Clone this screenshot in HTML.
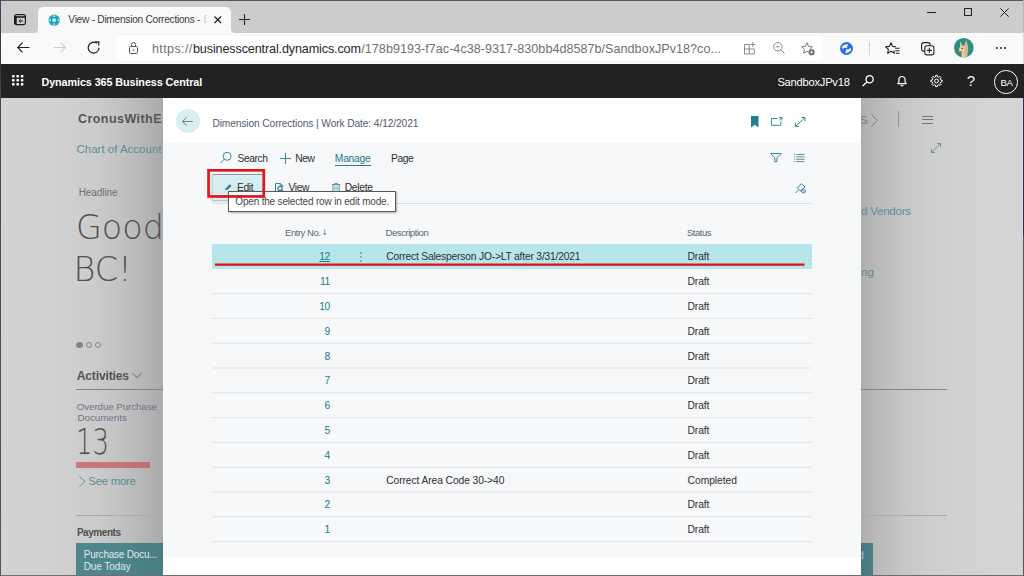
<!DOCTYPE html>
<html>
<head>
<meta charset="utf-8">
<title>View - Dimension Corrections</title>
<style>
*{box-sizing:border-box;margin:0;padding:0}
html,body{width:1024px;height:576px;overflow:hidden;background:#d2d2d2}
body{font-family:"Liberation Sans",sans-serif;position:relative;color:#212121}
.abs{position:absolute}
.t{position:absolute;white-space:nowrap;line-height:1}
svg{position:absolute;overflow:visible}
.light{font-family:"DejaVu Sans Light","DejaVu Sans","Liberation Sans",sans-serif;font-weight:200}
#tabbar{left:0;top:0;width:1024px;height:33px;background:#cccccc}
#topline{left:0;top:0;width:1024px;height:1px;background:#55585c}
#tab{left:38px;top:7px;width:193px;height:26px;background:#f9f9f9;border-radius:5px 5px 0 0}
#toolbar{left:0;top:33px;width:1024px;height:31px;background:#f9f9f9}
#url{left:116px;top:36px;width:707px;height:24px;background:#fff;border-radius:4px}
#apphdr{left:0;top:64px;width:1024px;height:34px;background:#222222}
#leftedge{left:0;top:0;width:1px;height:576px;background:linear-gradient(180deg,#3b4a66 0,#30363f 64px,#4a4a4a 98px,#555 100%)}
#bg{left:0;top:98px;width:163px;height:478px;background:linear-gradient(90deg,#d3d3d3 0,#d1d1d1 60px,#cbcbcb 95px,#c0c0c0 125px,#b5b5b5 145px,#aaaaaa 163px)}
#bgr{left:861px;top:98px;width:163px;height:478px;background:linear-gradient(90deg,#adadad 0,#b9b9b9 15px,#c5c5c5 40px,#cecece 70px,#d3d3d3 110px,#d5d5d5 163px)}
#dlg{left:163px;top:98px;width:698px;height:478px;background:#f6f8f9}
#dlghdr{left:163px;top:98px;width:698px;height:45px;background:#fff}
#dlgftr{left:163px;top:557px;width:698px;height:19px;background:#fff}
#botline{left:0;top:575px;width:1024px;height:1px;background:#6e6e6e}
.row{position:absolute;left:212px;width:599px;height:1px;background:#dcdfe1}
</style>
</head>
<body>
<div class="abs" id="bg"></div>
<div class="abs" id="bgr"></div>

<!-- left background content -->
<div class="t light" style="left:76px;top:210.5px;font-size:33.4px;color:#505050;transform:scaleX(1.0);transform-origin:0 0">Good</div>
<div class="t light" style="left:73.6px;top:252.5px;font-size:33.4px;color:#505050;transform:scaleX(1.0);transform-origin:0 0">BC!</div>
<div class="abs" style="left:76px;top:342px;width:7px;height:6px;border-radius:50%;background:#7b8494"></div>
<div class="abs" style="left:86px;top:342px;width:6px;height:6px;border-radius:50%;border:1px solid #80858f"></div>
<div class="abs" style="left:95px;top:342px;width:6px;height:6px;border-radius:50%;border:1px solid #80858f"></div>
<svg style="left:132px;top:373px" width="10" height="5" viewBox="0 0 10 5"><path d="M0.3 0.3 L5 4.6 L9.7 0.3" fill="none" stroke="#666" stroke-width="0.9"/></svg>
<div class="abs" style="left:76px;top:389px;width:87px;height:1px;background:#7d8494"></div>
<div class="t light" style="left:75.5px;top:425px;font-size:35px;color:#505050;transform:scaleX(0.74);transform-origin:0 0">13</div>
<div class="abs" style="left:76px;top:462px;width:74px;height:6px;background:linear-gradient(90deg,#c97b7c,#ba7172)"></div>
<svg style="left:79px;top:475.5px" width="7" height="11" viewBox="0 0 7 11"><path d="M0.4 0.4 L6 5.5 L0.4 10.6" fill="none" stroke="#5b8e94" stroke-width="0.9"/></svg>
<div class="abs" style="left:76px;top:515px;width:87px;height:1px;background:#a8abb1"></div>
<div class="abs" style="left:76px;top:543px;width:87px;height:33px;background:linear-gradient(90deg,#50878e 0,#4f858c 40px,#4a7c83 87px)"></div>

<!-- right background content -->
<div class="t" style="left:860.5px;top:116.3px;font-size:10px;color:#737986">S<span style="font-size:5px">i</span></div>
<svg style="left:871px;top:114px" width="7" height="13" viewBox="0 0 7 13"><path d="M0.4 0.4 L6.5 6.5 L0.4 12.6" fill="none" stroke="#70757f" stroke-width="0.9"/></svg>
<div class="abs" style="left:898px;top:111px;width:1px;height:16px;background:#8f949c"></div>
<div class="abs" style="left:921.5px;top:115.5px;width:11.5px;height:1px;background:#70757f"></div>
<div class="abs" style="left:921.5px;top:119px;width:11.5px;height:1px;background:#70757f"></div>
<div class="abs" style="left:921.5px;top:122.5px;width:11.5px;height:1px;background:#70757f"></div>
<svg style="left:931px;top:143px" width="10" height="10" viewBox="0 0 10 10"><path d="M0.5 9.5 L9.5 0.5 M6 0.5 H9.5 V4 M0.5 6 V9.5 H4" fill="none" stroke="#5b8e94" stroke-width="0.9"/></svg>
<div class="abs" style="left:861px;top:389px;width:86px;height:1px;background:#7d8494"></div>
<div class="abs" style="left:861px;top:515px;width:86px;height:1px;background:#a8abb1"></div>
<div class="abs" style="left:861px;top:543px;width:12px;height:33px;background:linear-gradient(90deg,#467780,#4b7f87)"></div>
<div class="t" style="left:858.3px;top:550.5px;font-size:10px;color:#a9c4c8">d</div>

<!-- dialog -->
<div class="abs" id="dlg"></div>
<div class="abs" id="dlghdr"></div>
<div class="abs" id="dlgftr"></div>

<!-- back button -->
<div class="abs" style="left:175.5px;top:109px;width:24px;height:24px;border-radius:50%;background:#d8eff2"></div>
<svg style="left:182px;top:116.5px" width="11" height="9" viewBox="0 0 11 9"><path d="M10.8 4.5 H0.8 M4.6 0.4 L0.6 4.5 L4.6 8.6" fill="none" stroke="#69797e" stroke-width="0.9"/></svg>

<!-- header right icons -->
<svg style="left:750.5px;top:116px" width="7.5" height="11.5" viewBox="0 0 7.5 11.5"><path d="M0 0 H7.5 V11.5 L3.75 8.7 L0 11.5 Z" fill="#237f8b"/></svg>
<svg style="left:771px;top:117px" width="11.5" height="9" viewBox="0 0 11.5 9"><path d="M6.5 1.5 H0.5 V8.3 H9.8 V4.5 M8 0.5 H11 V3.5 M11 0.5 L8 3.3" fill="none" stroke="#237f8b" stroke-width="0.9"/></svg>
<svg style="left:795px;top:117px" width="10.5" height="10" viewBox="0 0 10.5 10"><path d="M0.5 9.5 L10 0.5 M6.3 0.5 H10 V4 M0.5 6 V9.5 H4.2" fill="none" stroke="#237f8b" stroke-width="0.9"/></svg>

<!-- action bar row 1 icons -->
<svg style="left:219.8px;top:152px" width="12" height="12" viewBox="0 0 12 12"><circle cx="7.1" cy="4.3" r="4" fill="none" stroke="#237f8b" stroke-width="0.9"/><path d="M4.2 7.2 L0.4 11.2" stroke="#237f8b" stroke-width="0.9" fill="none"/></svg>
<svg style="left:280px;top:153px" width="11" height="11" viewBox="0 0 11 11"><path d="M5.5 0 V11 M0 5.5 H11" stroke="#237f8b" stroke-width="0.9" fill="none"/></svg>
<div class="abs" style="left:334.5px;top:164.5px;width:36.5px;height:1.2px;background:#237f8b"></div>
<svg style="left:769.7px;top:153px" width="11.7" height="9.5" viewBox="0 0 11.7 9.5"><path d="M0.5 0.5 H11.2 L7 4.8 V8.5 L4.8 9 V4.8 Z" fill="none" stroke="#237f8b" stroke-width="0.9"/></svg>
<svg style="left:794.4px;top:154px" width="10.6" height="8" viewBox="0 0 10.6 8"><path d="M2.2 0.5 H10.6 M2.2 2.9 H10.6 M2.2 5.3 H10.6 M2.2 7.6 H10.6 M0 0.5 H1.2 M0 2.9 H1.2 M0 5.3 H1.2 M0 7.6 H1.2" stroke="#237f8b" stroke-width="0.8" fill="none"/></svg>

<!-- action bar row 2 -->
<div class="abs" style="left:212px;top:174px;width:50.5px;height:26px;background:#d5eef1;border-top:1px solid #8c9a9c;border-left:1px solid #c2d6d8;box-shadow:0 1px 2px rgba(0,0,0,.3)"></div>
<div class="abs" style="left:212px;top:203px;width:599px;height:1px;background:#dcdfe1"></div>
<svg style="left:224.8px;top:184px" width="6.8" height="6.4" viewBox="0 0 6.8 6.4"><path d="M0.2 6.3 L0.9 4.2 L4.8 0.3 L6.5 1.9 L2.5 5.7 Z" fill="#237f8b"/></svg>
<svg style="left:275px;top:182.6px" width="9" height="9" viewBox="0 0 9 9"><path d="M0.5 8.6 V0.5 H5.5 L8 3 V3.8 M5.3 0.5 V3 H8" fill="none" stroke="#237f8b" stroke-width="0.9"/><circle cx="5" cy="5.4" r="2.1" fill="none" stroke="#237f8b" stroke-width="1.1"/><path d="M6.6 7 L8.6 8.8" stroke="#237f8b" stroke-width="1.1"/></svg>
<svg style="left:331.6px;top:182.6px" width="8.2" height="9" viewBox="0 0 8.2 9"><path d="M0 1.6 H8.2 M2.9 0.4 H5.3 V1.6 M2.9 0.4 V1.6 M1 1.6 V8.6 H7.2 V1.6" fill="none" stroke="#237f8b" stroke-width="0.8"/><path d="M2.8 3 V7.4 M4.1 3 V7.4 M5.4 3 V7.4" fill="none" stroke="#4d9aa4" stroke-width="0.6"/></svg>
<svg style="left:795px;top:182.5px" width="10.7" height="10.4" viewBox="0 0 10.7 10.4"><path d="M0.4 10 L3.6 6.8 M1.6 4.2 L6 8.6 M2.6 5 L6.4 0.6 L10 4 L5.4 7.8" fill="none" stroke="#237f8b" stroke-width="0.9"/><circle cx="8.4" cy="8" r="1.9" fill="#f6f8f9" stroke="#237f8b" stroke-width="0.9"/><path d="M7.2 6.8 L9.6 9.2" stroke="#237f8b" stroke-width="0.7"/></svg>


<!-- tooltip -->
<div class="abs" style="left:228px;top:191px;width:168px;height:21px;background:#fff;border:1px solid #5a5a5a;box-shadow:1px 1px 2px rgba(0,0,0,.3)"></div>
<!-- red highlight box -->
<svg style="left:0;top:0" width="1024" height="576"><rect x="208.55" y="170.35" width="55.2" height="26.1" fill="none" stroke="#e3141b" stroke-width="2.7"/></svg>

<!-- selected row -->
<div class="abs" style="left:212px;top:244.3px;width:599.5px;height:24.5px;background:#b6e6ea"></div>
<svg style="left:0;top:0" width="1024" height="576"><rect x="215" y="263.5" width="589.5" height="2.3" fill="#e3141b"/>
<g fill="#6a7a80"><rect x="360.2" y="252.3" width="1.4" height="1.5"/><rect x="360.2" y="256.3" width="1.4" height="1.5"/><rect x="360.2" y="260.3" width="1.4" height="1.5"/></g>
<g fill="#dfe2e4"><rect x="212" y="293.1" width="599.5" height="1"/><rect x="212" y="317.9" width="599.5" height="1"/><rect x="212" y="342.7" width="599.5" height="1"/><rect x="212" y="367.5" width="599.5" height="1"/><rect x="212" y="392.3" width="599.5" height="1"/><rect x="212" y="417.1" width="599.5" height="1"/><rect x="212" y="441.9" width="599.5" height="1"/><rect x="212" y="466.7" width="599.5" height="1"/><rect x="212" y="491.5" width="599.5" height="1"/><rect x="212" y="516.3" width="599.5" height="1"/><rect x="212" y="541.1" width="599.5" height="1"/></g>
</svg>

<!-- app header -->
<div class="abs" id="apphdr"></div>
<svg style="left:11.7px;top:75.3px" width="11.4" height="10.5" viewBox="0 0 11.4 10.5" fill="#fff"><rect x="0" y="0" width="2.6" height="2.4" rx="0.6"/><rect x="4.4" y="0" width="2.6" height="2.4" rx="0.6"/><rect x="8.8" y="0" width="2.6" height="2.4" rx="0.6"/><rect x="0" y="4.05" width="2.6" height="2.4" rx="0.6"/><rect x="4.4" y="4.05" width="2.6" height="2.4" rx="0.6"/><rect x="8.8" y="4.05" width="2.6" height="2.4" rx="0.6"/><rect x="0" y="8.1" width="2.6" height="2.4" rx="0.6"/><rect x="4.4" y="8.1" width="2.6" height="2.4" rx="0.6"/><rect x="8.8" y="8.1" width="2.6" height="2.4" rx="0.6"/></svg>
<svg style="left:861.8px;top:75.4px" width="12" height="11.5" viewBox="0 0 12 11.5"><circle cx="7.6" cy="4.3" r="3.6" fill="none" stroke="#fff" stroke-width="1.3"/><path d="M5 7 L0.6 11" stroke="#fff" stroke-width="1.4" fill="none"/></svg>
<svg style="left:897px;top:76px" width="10" height="10.5" viewBox="0 0 10 10.5"><path d="M0.8 7.7 H9.2 L8.1 6 V3.6 A3.1 3.1 0 0 0 1.9 3.6 V6 Z" fill="none" stroke="#fff" stroke-width="1.2" stroke-linejoin="round"/><path d="M3.7 8.9 A1.4 1.4 0 0 0 6.3 8.9" fill="none" stroke="#fff" stroke-width="1.2"/></svg>
<svg style="left:930px;top:75.4px" width="13" height="12" viewBox="0 0 13 12"><path d="M10.70 5.08 L12.13 5.14 L12.13 6.86 L10.70 6.92 L10.12 8.32 L11.09 9.38 L9.88 10.59 L8.82 9.62 L7.42 10.20 L7.36 11.63 L5.64 11.63 L5.58 10.20 L4.18 9.62 L3.12 10.59 L1.91 9.38 L2.88 8.32 L2.30 6.92 L0.87 6.86 L0.87 5.14 L2.30 5.08 L2.88 3.68 L1.91 2.62 L3.12 1.41 L4.18 2.38 L5.58 1.80 L5.64 0.37 L7.36 0.37 L7.42 1.80 L8.82 2.38 L9.88 1.41 L11.09 2.62 L10.12 3.68 Z" fill="none" stroke="#fff" stroke-width="1" stroke-linejoin="round"/><circle cx="6.5" cy="6" r="1.9" fill="none" stroke="#fff" stroke-width="1"/></svg>
<div class="t" style="left:966.8px;top:72.8px;font-size:15px;color:#f0f0f0">?</div>
<div class="abs" style="left:994px;top:70px;width:23.5px;height:23.5px;border-radius:50%;border:1px solid #fff"></div>

<!-- browser chrome -->
<div class="abs" id="tabbar"></div>
<div class="abs" id="tab"></div>
<svg style="left:34px;top:29px" width="4" height="4" viewBox="0 0 4 4"><path d="M0 4 Q4 4 4 0 V4 Z" fill="#f9f9f9"/></svg>
<svg style="left:231px;top:29px" width="4" height="4" viewBox="0 0 4 4"><path d="M4 4 Q0 4 0 0 V4 Z" fill="#f9f9f9"/></svg>
<div class="abs" id="toolbar"></div>
<div class="abs" id="url"></div>
<div class="abs" id="topline"></div>
<svg style="left:14px;top:14.2px" width="12" height="11.2" viewBox="0 0 12 11.2"><rect x="0.6" y="0.6" width="10.8" height="10" rx="1.8" fill="none" stroke="#1c1c1c" stroke-width="1.2"/><path d="M0.6 3 H11.4" stroke="#1c1c1c" stroke-width="1.6"/><path d="M1.6 2 V10" stroke="#1c1c1c" stroke-width="2.2"/><path d="M5.2 7 H8.8 M6.8 5.4 L5.2 7 L6.8 8.6" stroke="#1c1c1c" stroke-width="1" fill="none"/></svg>
<svg style="left:47.5px;top:13.7px" width="12.3" height="12.3" viewBox="0 0 13 13"><circle cx="6.5" cy="6.5" r="6" fill="#1cb0c2"/><path d="M6.5 0 L7.6 3.2 L5.4 3.2 Z M6.5 13 L7.6 9.8 L5.4 9.8 Z M0 6.5 L3.2 5.4 L3.2 7.6 Z M13 6.5 L9.8 5.4 L9.8 7.6 Z" fill="#bdf0f5"/><circle cx="6.5" cy="6.5" r="3.4" fill="#0f8fa3"/><circle cx="6.5" cy="6.5" r="2.3" fill="#a6e9f0"/><circle cx="6.2" cy="6.2" r="1.1" fill="#e8fbfd"/></svg>
<div class="t" style="left:203.6px;top:14.9px;font-size:10.2px;color:#cfcfcf;width:3.4px;overflow:hidden">D</div>
<svg style="left:214px;top:16px" width="7.5" height="7.5" viewBox="0 0 7.5 7.5"><path d="M0.5 0.5 L7 7 M7 0.5 L0.5 7" stroke="#222" stroke-width="1.3"/></svg>
<svg style="left:239px;top:14px" width="11" height="11" viewBox="0 0 11 11"><path d="M5.5 0 V11 M0 5.5 H11" stroke="#222" stroke-width="1.1"/></svg>
<div class="abs" style="left:927px;top:12px;width:8.5px;height:1px;background:#222"></div>
<div class="abs" style="left:964px;top:8px;width:8px;height:8px;border:1px solid #222"></div>
<svg style="left:1000.4px;top:7.8px" width="9" height="9" viewBox="0 0 9 9"><path d="M0.3 0.3 L8.7 8.7 M8.7 0.3 L0.3 8.7" stroke="#222" stroke-width="1"/></svg>
<svg style="left:17px;top:42px" width="13" height="11" viewBox="0 0 13 11"><path d="M12.5 5.5 H1 M5.5 0.7 L0.8 5.5 L5.5 10.3" fill="none" stroke="#222" stroke-width="1.2"/></svg>
<svg style="left:52.5px;top:42px" width="13" height="11" viewBox="0 0 13 11"><path d="M0.5 5.5 H12 M7.5 0.7 L12.2 5.5 L7.5 10.3" fill="none" stroke="#cdcdcd" stroke-width="1.2"/></svg>
<svg style="left:87px;top:41.3px" width="13.3" height="13.3" viewBox="0 0 13 13"><path d="M11.8 6.5 A5.3 5.3 0 1 1 9.8 2.3" fill="none" stroke="#222" stroke-width="1.2"/><path d="M8 0.8 H11.5 V4.3" fill="none" stroke="#222" stroke-width="1.2"/></svg>
<svg style="left:129px;top:41.5px" width="9" height="12" viewBox="0 0 9 12"><rect x="0.5" y="4.5" width="8" height="7" rx="1" fill="none" stroke="#555" stroke-width="1"/><path d="M2.5 4.5 V2.5 A2 2 0 0 1 6.5 2.5 V4.5" fill="none" stroke="#555" stroke-width="1"/><circle cx="4.5" cy="8" r="0.8" fill="#555"/></svg>
<svg style="left:744.4px;top:41.8px" width="12.3" height="12.6" viewBox="0 0 12.3 12.6"><path d="M0.5 2.5 H5.3 V12 H0.5 Z M5.3 7 H10.3 V12 H5.3 M0.5 7 H5.3 M8.8 0 V5 M6.3 2.5 H11.3" fill="none" stroke="#8a8a8a" stroke-width="1"/></svg>
<svg style="left:773px;top:42px" width="12" height="12" viewBox="0 0 12 12"><circle cx="4.8" cy="4.8" r="4.2" fill="none" stroke="#8a8a8a" stroke-width="1"/><path d="M7.8 7.8 L11.5 11.5 M2.8 4.8 H6.8" stroke="#8a8a8a" stroke-width="1" fill="none"/></svg>
<svg style="left:801px;top:41.5px" width="14.5" height="13.5" viewBox="0 0 14.5 13.5"><path d="M6 0.8 L7.6 4.4 L11.4 4.8 L8.6 7.4 L9.3 11.2 L6 9.3 L2.7 11.2 L3.4 7.4 L0.6 4.8 L4.4 4.4 Z" fill="none" stroke="#7a7a7a" stroke-width="1"/><circle cx="10.6" cy="10.2" r="3.4" fill="#5a5a5a" stroke="#fff" stroke-width="0.7"/><path d="M10.6 8.5 V11.9 M8.9 10.2 H12.3" stroke="#fff" stroke-width="0.9"/></svg>
<svg style="left:840px;top:41.8px" width="13" height="13" viewBox="0 0 13 13"><circle cx="6.5" cy="6.5" r="6.5" fill="#2a6fe0"/><path d="M2 4.6 Q4.6 1.6 8.4 2.4 Q6.4 4.4 7.4 5.6 Q5.4 6.4 4.2 5.8 Q3.4 7.4 2.2 6.6 Z" fill="#eef4fe"/><path d="M11 8.2 Q9 11.6 5 10.8 Q6.8 9 5.8 7.6 Q7.8 6.6 9 7.2 Q9.8 5.8 11 6.4 Z" fill="#eef4fe"/></svg>
<div class="abs" style="left:869px;top:42px;width:1px;height:13px;background:#d2d2d2"></div>
<svg style="left:885px;top:41.5px" width="15" height="14" viewBox="0 0 15 14"><path d="M11 4.8 L7.6 4.4 L6 0.8 L4.4 4.4 L0.6 4.8 L3.4 7.4 L2.7 11.2 L6 9.3 L9.3 11.2 L8.8 8.5" fill="none" stroke="#222" stroke-width="1.1" stroke-linejoin="round"/><path d="M10 6.2 H14.5 M10.3 8.7 H14.5 M10.8 11.2 H14.5" stroke="#222" stroke-width="1.1"/></svg>
<svg style="left:921px;top:41.5px" width="13.5" height="13.5" viewBox="0 0 13.5 13.5"><rect x="0.6" y="0.6" width="8.5" height="8.5" rx="2.2" fill="none" stroke="#222" stroke-width="1.1"/><rect x="3.8" y="3.8" width="9.1" height="9.1" rx="2.2" fill="#f9f9f9" stroke="#222" stroke-width="1.1"/><path d="M8.35 5.8 V10.9 M5.8 8.35 H10.9" stroke="#222" stroke-width="1.1"/></svg>
<svg style="left:954.2px;top:38.2px" width="19.6" height="19.6" viewBox="0 0 20 20"><defs><clipPath id="av"><circle cx="10" cy="10" r="10"/></clipPath></defs><circle cx="10" cy="10" r="10" fill="#2b8f7f"/><g clip-path="url(#av)"><path d="M6.3 3 L8.4 8 L10.6 7.6 L12.6 2.2 L14 8.8 Q15 12 13.6 15 L13.4 21 L7.6 21 L7.8 15.4 Q4.2 13.6 4 12 Q5.6 10.4 6.2 8.6 Z" fill="#e9cfa9"/><path d="M10.8 8 L12.6 2.2 L14 8.8 Q15 12 13.6 15 L13.4 21 L10.6 21 Z" fill="#d9b98e"/><path d="M6.9 4.6 L8.2 7.8 L7 8.2 Z M12.3 4 L12.9 7.6 L11.4 7.6 Z" fill="#e8a9a0"/><path d="M5.6 12.8 Q7 14.6 8.6 13.4 Q7.6 15.4 6.2 14.6 Z" fill="#d9483b"/><circle cx="8.4" cy="10.6" r="0.7" fill="#4a2e1c"/><circle cx="4.6" cy="11.9" r="0.7" fill="#4a2e1c"/></g></svg>
<div class="abs" style="left:995.6px;top:47px;width:2.2px;height:2.2px;background:#222;border-radius:50%"></div>
<div class="abs" style="left:999.8px;top:47px;width:2.2px;height:2.2px;background:#222;border-radius:50%"></div>
<div class="abs" style="left:1004px;top:47px;width:2.2px;height:2.2px;background:#222;border-radius:50%"></div>

<div class="t g" style="left:78.0px;top:113.4px;font-size:12.5px;color:#555;letter-spacing:0.445px;font-weight:bold;">CronusWithE</div>
<div class="t g" style="left:76.5px;top:143.6px;font-size:11.5px;color:#5b8e94;letter-spacing:-0.002px;">Chart of Account</div>
<div class="t g" style="left:78.7px;top:187.5px;font-size:10px;color:#6c6f78;letter-spacing:-0.083px;">Headline</div>
<div class="t g" style="left:76.7px;top:369.5px;font-size:12.2px;color:#555;letter-spacing:-0.200px;font-weight:bold;">Activities</div>
<div class="t g" style="left:76.8px;top:402.2px;font-size:9.8px;color:#6e7585;letter-spacing:-0.106px;">Overdue Purchase</div>
<div class="t g" style="left:77.5px;top:413.1px;font-size:9.8px;color:#6e7585;letter-spacing:-0.033px;">Documents</div>
<div class="t g" style="left:88.3px;top:475.6px;font-size:11.5px;color:#5b8e94;letter-spacing:-0.323px;">See more</div>
<div class="t g" style="left:76.9px;top:527.9px;font-size:10px;color:#505050;letter-spacing:-0.450px;font-weight:bold;">Payments</div>
<div class="t g" style="left:83.7px;top:550.0px;font-size:10px;color:#dfeaea;letter-spacing:-0.215px;">Purchase Docu...</div>
<div class="t g" style="left:83.7px;top:561.5px;font-size:10px;color:#dfeaea;letter-spacing:-0.068px;">Due Today</div>
<div class="t g" style="left:861.0px;top:205.7px;font-size:11.5px;color:#5b8e94;letter-spacing:-0.212px;">d Vendors</div>
<div class="t g" style="left:861.0px;top:267.0px;font-size:11.5px;color:#5b8e94;letter-spacing:0.003px;">ng</div>
<div class="t g" style="left:212.4px;top:119.1px;font-size:10.2px;color:#505c6d;letter-spacing:-0.100px;">Dimension Corrections | Work Date: 4/12/2021</div>
<div class="t g" style="left:237.6px;top:154.2px;font-size:10.3px;color:#303030;letter-spacing:-0.450px;">Search</div>
<div class="t g" style="left:295.3px;top:154.2px;font-size:10.3px;color:#303030;letter-spacing:-0.450px;">New</div>
<div class="t g" style="left:334.8px;top:154.2px;font-size:10.3px;color:#1d7a86;letter-spacing:-0.244px;">Manage</div>
<div class="t g" style="left:391.0px;top:154.2px;font-size:10.3px;color:#303030;letter-spacing:-0.450px;">Page</div>
<div class="t g" style="left:237.1px;top:183.3px;font-size:10.3px;color:#303030;letter-spacing:-0.450px;">Edit</div>
<div class="t g" style="left:288.6px;top:183.3px;font-size:10.3px;color:#303030;letter-spacing:-0.447px;">View</div>
<div class="t g" style="left:344.7px;top:183.3px;font-size:10.3px;color:#303030;letter-spacing:-0.293px;">Delete</div>
<div class="t g" style="left:235.3px;top:197.4px;font-size:10px;color:#484848;letter-spacing:-0.182px;">Open the selected row in edit mode.</div>
<div class="t g" style="left:285.0px;top:227.8px;font-size:9.5px;color:#5c6670;letter-spacing:-0.450px;">Entry No.</div>
<div class="t g" style="left:321.2px;top:228.4px;font-size:8.2px;color:#6a737c;letter-spacing:-0.450px;font-family:'DejaVu Sans','Liberation Sans',sans-serif;">&#8595;</div>
<div class="t g" style="left:385.6px;top:227.8px;font-size:9.5px;color:#5c6670;letter-spacing:-0.443px;">Description</div>
<div class="t g" style="left:686.9px;top:227.8px;font-size:9.5px;color:#5c6670;letter-spacing:-0.450px;">Status</div>
<div class="t g" style="right:694.1px;top:252.4px;font-size:10.3px;color:#1d7a86;letter-spacing:-0.450px;text-decoration:underline;">12</div>
<div class="t g" style="left:687.6px;top:252.4px;font-size:10.3px;color:#303030;letter-spacing:-0.157px;">Draft</div>
<div class="t g" style="left:386.2px;top:252.4px;font-size:10.3px;color:#303030;letter-spacing:-0.198px;">Correct Salesperson JO-&gt;LT after 3/31/2021</div>
<div class="t g" style="right:694.1px;top:277.2px;font-size:10.3px;color:#1d7a86;letter-spacing:-0.450px;">11</div>
<div class="t g" style="left:687.6px;top:277.2px;font-size:10.3px;color:#303030;letter-spacing:-0.157px;">Draft</div>
<div class="t g" style="right:694.1px;top:302.0px;font-size:10.3px;color:#1d7a86;letter-spacing:-0.450px;">10</div>
<div class="t g" style="left:687.6px;top:302.0px;font-size:10.3px;color:#303030;letter-spacing:-0.157px;">Draft</div>
<div class="t g" style="right:694.1px;top:326.8px;font-size:10.3px;color:#1d7a86;letter-spacing:-0.334px;">9</div>
<div class="t g" style="left:687.6px;top:326.8px;font-size:10.3px;color:#303030;letter-spacing:-0.157px;">Draft</div>
<div class="t g" style="right:694.1px;top:351.6px;font-size:10.3px;color:#1d7a86;letter-spacing:-0.334px;">8</div>
<div class="t g" style="left:687.6px;top:351.6px;font-size:10.3px;color:#303030;letter-spacing:-0.157px;">Draft</div>
<div class="t g" style="right:694.1px;top:376.4px;font-size:10.3px;color:#1d7a86;letter-spacing:-0.334px;">7</div>
<div class="t g" style="left:687.6px;top:376.4px;font-size:10.3px;color:#303030;letter-spacing:-0.157px;">Draft</div>
<div class="t g" style="right:694.1px;top:401.2px;font-size:10.3px;color:#1d7a86;letter-spacing:-0.334px;">6</div>
<div class="t g" style="left:687.6px;top:401.2px;font-size:10.3px;color:#303030;letter-spacing:-0.157px;">Draft</div>
<div class="t g" style="right:694.1px;top:426.0px;font-size:10.3px;color:#1d7a86;letter-spacing:-0.334px;">5</div>
<div class="t g" style="left:687.6px;top:426.0px;font-size:10.3px;color:#303030;letter-spacing:-0.157px;">Draft</div>
<div class="t g" style="right:694.1px;top:450.8px;font-size:10.3px;color:#1d7a86;letter-spacing:-0.334px;">4</div>
<div class="t g" style="left:687.6px;top:450.8px;font-size:10.3px;color:#303030;letter-spacing:-0.157px;">Draft</div>
<div class="t g" style="right:694.1px;top:475.6px;font-size:10.3px;color:#1d7a86;letter-spacing:-0.334px;">3</div>
<div class="t g" style="left:687.6px;top:475.6px;font-size:10.3px;color:#303030;letter-spacing:-0.062px;">Completed</div>
<div class="t g" style="left:386.2px;top:475.6px;font-size:10.3px;color:#303030;letter-spacing:-0.100px;">Correct Area Code 30-&gt;40</div>
<div class="t g" style="right:694.1px;top:500.4px;font-size:10.3px;color:#1d7a86;letter-spacing:-0.334px;">2</div>
<div class="t g" style="left:687.6px;top:500.4px;font-size:10.3px;color:#303030;letter-spacing:-0.157px;">Draft</div>
<div class="t g" style="right:694.1px;top:525.2px;font-size:10.3px;color:#1d7a86;letter-spacing:-0.334px;">1</div>
<div class="t g" style="left:687.6px;top:525.2px;font-size:10.3px;color:#303030;letter-spacing:-0.157px;">Draft</div>
<div class="t g" style="left:41.5px;top:76.8px;font-size:10.8px;color:#fff;letter-spacing:-0.091px;font-weight:bold;">Dynamics 365 Business Central</div>
<div class="t g" style="left:777.4px;top:77.0px;font-size:11.2px;color:#fff;letter-spacing:-0.251px;">SandboxJPv18</div>
<div class="t g" style="left:1000.5px;top:77.7px;font-size:9.6px;color:#fff;letter-spacing:-0.450px;">BA</div>
<div class="t g" style="left:68.3px;top:15.2px;font-size:10.2px;color:#3a3a3a;letter-spacing:-0.277px;">View - Dimension Corrections -</div>
<div class="t g" style="left:152.0px;top:42.8px;font-size:12.6px;color:#707070;letter-spacing:0.355px;">https://</div>
<div class="t g" style="left:193.0px;top:42.8px;font-size:12.6px;color:#262626;letter-spacing:-0.130px;">businesscentral.dynamics.com</div>
<div class="t g" style="left:361.3px;top:42.8px;font-size:12.6px;color:#707070;letter-spacing:0.022px;">/178b9193-f7ac-4c38-9317-830bb4d8587b/SandboxJPv18?co...</div>

<div class="abs" id="botline"></div>
<div class="abs" id="leftedge"></div>
<div class="abs" style="left:1023px;top:0;width:1px;height:576px;background:linear-gradient(180deg,#b4b4b4 0,#b4b4b4 32px,#dcdcdc 32px,#dcdcdc 64px,#222 64px,#222 98px,#22325e 98px,#22325e 235px,#5a5550 236px,#5a5550 100%)"></div>
</body>
</html>
